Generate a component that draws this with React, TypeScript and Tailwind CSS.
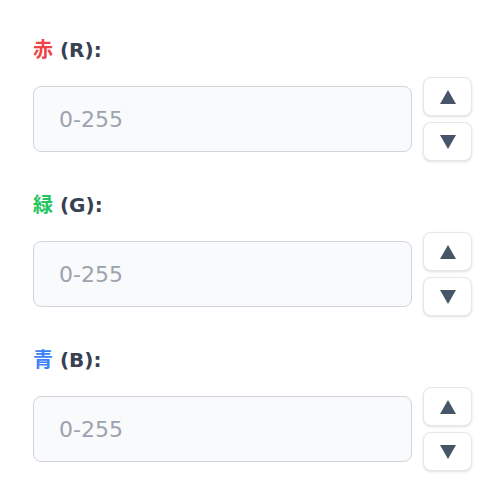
import React from "react";

const rows = [
  { ch: "赤", k: "R", color: "text-[#ef4444]" },
  { ch: "緑", k: "G", color: "text-[#22c55e]" },
  { ch: "青", k: "B", color: "text-[#3b82f6]" },
];

function Tri({ up }: { up: boolean }) {
  return (
    <svg width="16" height="14" viewBox="0 0 16 14">
      <polygon points={up ? "8,0 16,14 0,14" : "0,0 16,0 8,14"} fill="#475569" />
    </svg>
  );
}

export default function App() {
  return (
    <div
      className="w-[500px] h-[500px] bg-white pl-[33px] pr-[28px] pt-[38px]"
      style={{ fontFamily: '"DejaVu Sans", "Noto Sans CJK JP", sans-serif' }}
    >
      <div className="flex flex-col gap-[32px]">
        {rows.map((r) => (
          <div key={r.k} className="flex flex-col gap-[15px]">
            <label className="text-[20px] leading-[24px] font-bold text-[#374151]">
              <span className={r.color}>{r.ch}</span> ({r.k}):
            </label>
            <div className="flex items-center gap-[11px]">
              <input
                type="text"
                placeholder="0-255"
                className="w-[379px] h-[66px] rounded-lg border border-[#d1d5db] bg-[#f9fafb] pl-[25px] text-[22px] text-[#374151] placeholder:text-[#9ca3af] outline-none"
              />
              <div className="flex flex-col gap-[6px]">
                <button className="w-[49px] h-[39px] rounded-lg border border-[#e5e7eb] bg-white shadow-sm flex items-center justify-center">
                  <Tri up={true} />
                </button>
                <button className="w-[49px] h-[39px] rounded-lg border border-[#e5e7eb] bg-white shadow-sm flex items-center justify-center">
                  <Tri up={false} />
                </button>
              </div>
            </div>
          </div>
        ))}
      </div>
    </div>
  );
}
